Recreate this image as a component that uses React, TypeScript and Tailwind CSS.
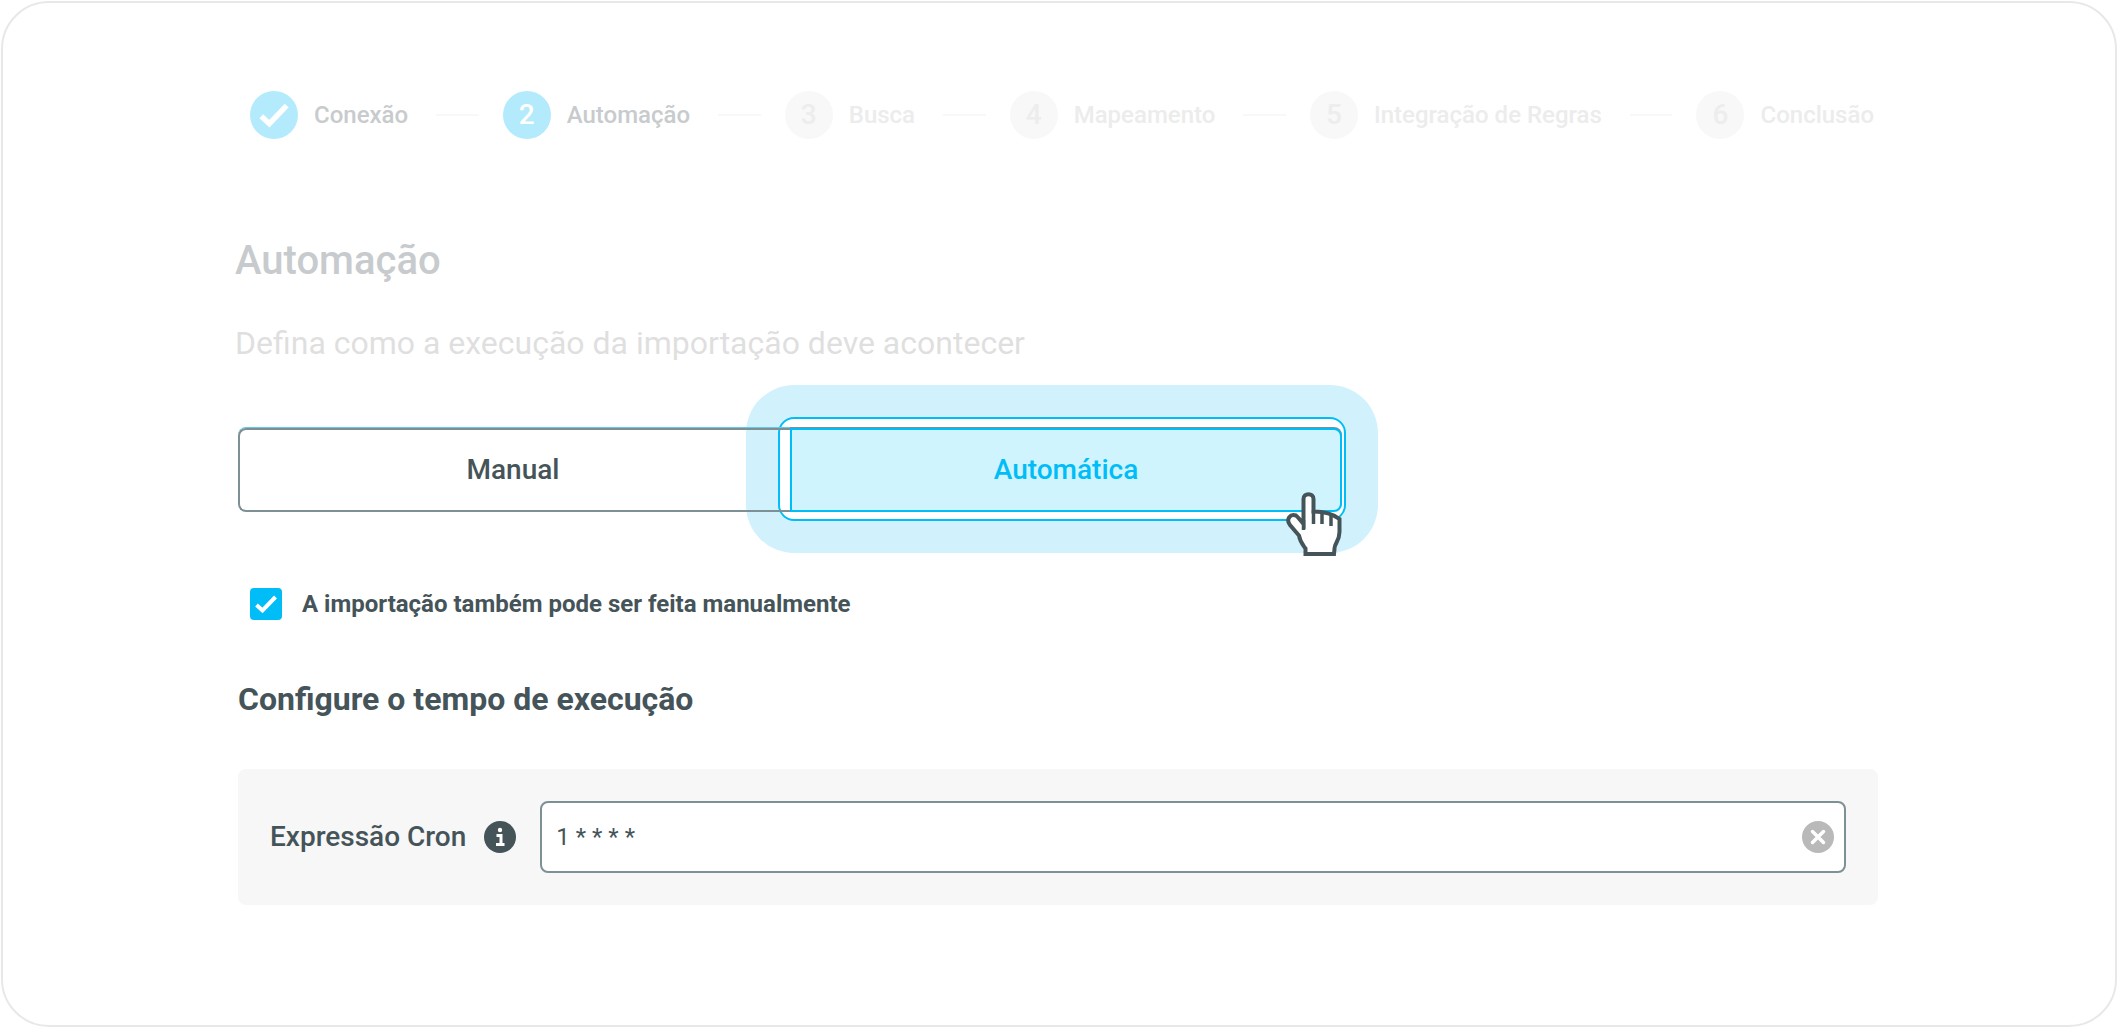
import { useState } from 'react'

const steps = ['Conexão', 'Automação', 'Busca', 'Mapeamento', 'Integração de Regras', 'Conclusão']
const current = 1

function Tick({ className }: { className?: string }) {
  return (
    <svg viewBox="0 0 24 24" className={className} fill="none" stroke="currentColor" strokeWidth="4" aria-hidden="true">
      <path d="M2.500 13 L8.500 18.500 L21.500 5" />
    </svg>
  )
}

function Stepper() {
  return (
    <ol className="flex items-center pl-3 pr-1">
      {steps.map((label, i) => {
        const active = i <= current
        return (
          <li key={label} className={i > 0 ? 'flex flex-auto items-center' : 'flex items-center'}>
            {i > 0 && <span className="ml-7 mr-6 h-0.5 flex-1 bg-[#f8f8f8]" />}
            <span
              className={
                active
                  ? 'flex size-12 items-center justify-center rounded-full bg-[#b3ebfd] text-[28px] font-medium text-white'
                  : 'flex size-12 items-center justify-center rounded-full bg-[#f8f8f8] text-[28px] font-medium text-[#ededed]'
              }
            >
              {i < current ? <Tick className="size-8" /> : i + 1}
            </span>
            <span className={active ? 'ml-4 text-2xl font-medium text-[#c8cbcd]' : 'ml-4 text-2xl font-medium text-[#ececec]'}>
              {label}
            </span>
          </li>
        )
      })}
    </ol>
  )
}

function HandCursor() {
  return (
    <svg viewBox="0 0 56 64" className="pointer-events-none absolute right-0 -bottom-11 z-10 h-16 w-14" aria-hidden="true">
      <path
        d="M19.5 62 V56.5 C17 53 14 50 13 43.5 L4 33 C-0.5 27 4.500 21.500 10 23.500 C12 25 14 28 17.500 32 V7 C17.500 0.500 27.500 0.500 27.500 7 V19.500 C40 19.500 47 22 53.500 27 V40 C53.500 49 48 52 48.500 57 L48 62 Z"
        fill="#fff"
        stroke="#455459"
        strokeWidth="4"
      />
      <path d="M17.500 28 V38 M27.500 18 V32 M36 21 V32 M45 23 V34" fill="none" stroke="#455459" strokeWidth="3.500" />
    </svg>
  )
}

export default function App() {
  const [mode, setMode] = useState('auto')
  const [manualToo, setManualToo] = useState(true)
  const [cron, setCron] = useState('1 * * * *')

  return (
    <main className="min-h-screen bg-white pt-px pl-px font-['Roboto',sans-serif] text-[#455459]">
      <div className="min-h-[calc(100vh-1px)] rounded-[48px] border-2 border-[#e8e8e8] pt-[88px] pr-[237px] pb-20 pl-[235px]">
        <Stepper />

        <h1 className="mt-[98px] -ml-[3px] text-[40px] leading-12 font-medium text-[#c8cbcd]">Automação</h1>
        <p className="mt-[38px] -ml-[3px] text-[32px] leading-10 text-[#dfdfdf]">
          Defina como a execução da importação deve acontecer
        </p>

        <div className="relative isolate mt-[65px] grid max-w-[1104px] grid-cols-2" role="group" aria-label="Modo de execução">
          <button
            type="button"
            aria-pressed={mode === 'manual'}
            onClick={() => setMode('manual')}
            className="h-[84px] rounded-l-lg border-2 border-r-0 border-[#7d9096] pr-1 text-[28px] font-medium shadow-[0_-1px_0_#66c8e8]"
          >
            Manual
          </button>
          <div className="relative">
            <span className="absolute -top-[43px] -right-9 -bottom-[41px] -left-11 -z-10 rounded-[48px] bg-[#d1f2fd]" />
            <span className="absolute -top-[11px] -right-1 -bottom-[9px] -left-3 -z-10 rounded-2xl border-2 border-[#00bdf7] bg-white" />
            <button
              type="button"
              aria-pressed={mode === 'auto'}
              onClick={() => setMode('auto')}
              className="h-[84px] w-full rounded-r-lg border-2 border-[#00bdf7] bg-[#cff4fe] text-[28px] font-medium text-[#00bdf7] shadow-[0_-1px_0_#7d9096]"
            >
              Automática
            </button>
            <HandCursor />
          </div>
        </div>

        <label className="mt-[76px] ml-3 flex w-fit items-center gap-5 text-2xl font-bold">
          <span className="relative flex size-8">
            <input
              type="checkbox"
              checked={manualToo}
              onChange={e => setManualToo(e.target.checked)}
              className="size-8 appearance-none rounded-sm border-2 border-[#00bdf7] checked:bg-[#00bdf7]"
            />
            {manualToo && <Tick className="pointer-events-none absolute inset-1 size-6 text-white" />}
          </span>
          A importação também pode ser feita manualmente
        </label>

        <h2 className="mt-[59px] text-[32px] leading-10 font-bold">Configure o tempo de execução</h2>

        <div className="mt-[50px] flex items-center rounded-lg bg-[#f7f7f7] p-8">
          <label htmlFor="cron" className="text-[28px] font-medium">Expressão Cron</label>
          <svg viewBox="0 0 32 32" className="ml-[18px] size-8" role="img" aria-label="Informação">
            <circle cx="16" cy="16" r="16" fill="#455459" />
            <circle cx="16" cy="9" r="2.200" fill="#fff" />
            <path d="M12.500 14.500 H17 V23.500 M12 23.500 H20.500" fill="none" stroke="#fff" strokeWidth="3" />
          </svg>
          <div className="relative ml-6 flex-1">
            <input
              id="cron"
              type="text"
              value={cron}
              onChange={e => setCron(e.target.value)}
              className="h-[72px] w-full rounded-lg border-2 border-[#7d9096] bg-white pr-14 pl-[14px] text-2xl outline-none"
            />
            <button type="button" aria-label="Limpar" onClick={() => setCron('')} className="absolute top-5 right-3">
              <svg viewBox="0 0 32 32" className="size-8" aria-hidden="true">
                <circle cx="16" cy="16" r="16" fill="#b9b9b9" />
                <path d="M10.500 10.500 L21.500 21.500 M21.500 10.500 L10.500 21.500" stroke="#fff" strokeWidth="3.500" strokeLinecap="round" />
              </svg>
            </button>
          </div>
        </div>
      </div>
    </main>
  )
}
